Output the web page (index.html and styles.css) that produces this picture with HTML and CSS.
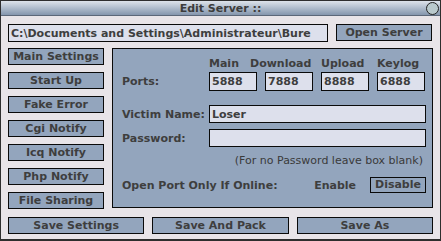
FILE: index.html
```html
<!DOCTYPE html>
<html lang="en">
<head>
    <meta charset="UTF-8">
    <title>Edit Server ::</title>
    <link rel="stylesheet" href="styles.css">
</head>
<body>
    <div class="window">
        <div class="titlebar">
            <span></span>
            <span class="title">Edit Server ::</span>
            <span class="close"></span>
        </div>

        <div class="content">
            <div class="path-row">
                <div class="field path">C:\Documents and Settings\Administrateur\Bure</div>
                <button class="btn">Open Server</button>
            </div>

            <div class="main-row">
                <div class="side">
                    <button class="btn">Main Settings</button>
                    <button class="btn">Start Up</button>
                    <button class="btn">Fake Error</button>
                    <button class="btn">Cgi Notify</button>
                    <button class="btn">Icq Notify</button>
                    <button class="btn">Php Notify</button>
                    <button class="btn">File Sharing</button>
                </div>

                <div class="panel">
                    <div class="grid heads">
                        <span></span>
                        <span>Main</span>
                        <span class="wide">Download</span>
                        <span>Upload</span>
                        <span>Keylog</span>
                    </div>
                    <div class="grid ports">
                        <label>Ports:</label>
                        <div class="field">5888</div>
                        <div class="field">7888</div>
                        <div class="field">8888</div>
                        <div class="field">6888</div>
                    </div>
                    <div class="grid line victim">
                        <label>Victim Name:</label>
                        <div class="field">Loser</div>
                    </div>
                    <div class="grid line password">
                        <label>Password:</label>
                        <div class="field"></div>
                    </div>
                    <div class="note">(For no Password leave box blank)</div>
                    <div class="online-row">
                        <span class="grow">Open Port Only If Online:</span>
                        <span class="enable">Enable</span>
                        <span class="toggle">Disable</span>
                    </div>
                </div>
            </div>

            <div class="bottom-row">
                <button class="btn">Save Settings</button>
                <button class="btn">Save And Pack</button>
                <button class="btn">Save As</button>
            </div>
        </div>
    </div>
</body>
</html>
```

FILE: styles.css
```css
body {
    margin: 0;
    padding: 0;
    font-family: "DejaVu Sans", Verdana, sans-serif;
    font-size: 11px;
    font-weight: bold;
    color: #3e3e3e;
}

.window {
    width: 441px;
    height: 241px;
    box-sizing: border-box;
    border: 1px solid #2e2e2e;
    border-bottom-width: 2px;
    background: #e8e4e8;
    display: flex;
    flex-direction: column;
}

.titlebar {
    height: 14px;
    display: grid;
    grid-template-columns: 1fr auto 1fr;
    align-items: center;
    background: linear-gradient(#dde3ea, #b4c0cf 45%, #8496ad);
    border-bottom: 1px solid #5b6778;
}

.title {
    color: #3c3c3c;
}

.close {
    justify-self: end;
    width: 11px;
    height: 11px;
    margin-right: 1px;
    border: 1px solid #222;
    border-radius: 50%;
    background: #b9c9cc;
}

.content {
    padding: 8px 7px 0 7px;
}

.btn {
    font: inherit;
    color: inherit;
    height: 17px;
    padding: 0;
    background: #93a5bd;
    border: 1px solid #0a0a0a;
    white-space: nowrap;
    overflow: hidden;
}

.field {
    height: 18px;
    box-sizing: border-box;
    border: 1px solid #0a0a0a;
    background: #dde0ec;
    padding: 1px 2px;
    white-space: nowrap;
    overflow: hidden;
    line-height: 15px;
}

/* path + open button */
.path-row {
    display: flex;
    gap: 8px;
    align-items: flex-start;
}

.path {
    width: 320px;
    flex: none;
}

.path-row .btn {
    width: 96px;
    flex: none;
}

/* sidebar + panel */
.main-row {
    display: flex;
    gap: 8px;
    margin-top: 6px;
}

.side {
    width: 96px;
    flex: none;
    display: flex;
    flex-direction: column;
    gap: 7px;
}

.panel {
    flex: 1;
    min-width: 0;
    height: 160px;
    box-sizing: border-box;
    border: 1px solid #0a0a0a;
    background: #93a5bd;
    padding: 8px 6px 0 9px;
    display: flex;
    flex-direction: column;
}

.grid {
    display: grid;
    grid-template-columns: 79px repeat(4, 48px);
    column-gap: 8px;
    align-items: center;
}

.grid label {
    white-space: nowrap;
}

.heads {
    height: 14px;
    line-height: 14px;
}

.heads .wide {
    margin-left: -15px;
    white-space: nowrap;
}

.ports {
    margin-top: 1px;
}

.ports .field {
    height: 19px;
    line-height: 16px;
}

.line {
    grid-template-columns: 87px 1fr;
    column-gap: 0;
}

.victim {
    margin-top: 14px;
}

.password {
    margin-top: 6px;
}

.note {
    margin-top: 7px;
    height: 14px;
    text-align: right;
    padding-right: 3px;
    font-weight: normal;
    color: #3a3a3a;
}

.online-row {
    display: flex;
    align-items: center;
    margin-top: 9px;
}

.grow {
    flex: 1;
}

.enable {
    margin-right: 14px;
}

.toggle {
    width: 56px;
    height: 16px;
    box-sizing: border-box;
    border: 1px solid #0a0a0a;
    text-align: center;
    line-height: 14px;
}

/* bottom buttons */
.bottom-row {
    display: grid;
    grid-template-columns: repeat(3, 1fr);
    gap: 8px;
    margin-top: 8px;
}
```
